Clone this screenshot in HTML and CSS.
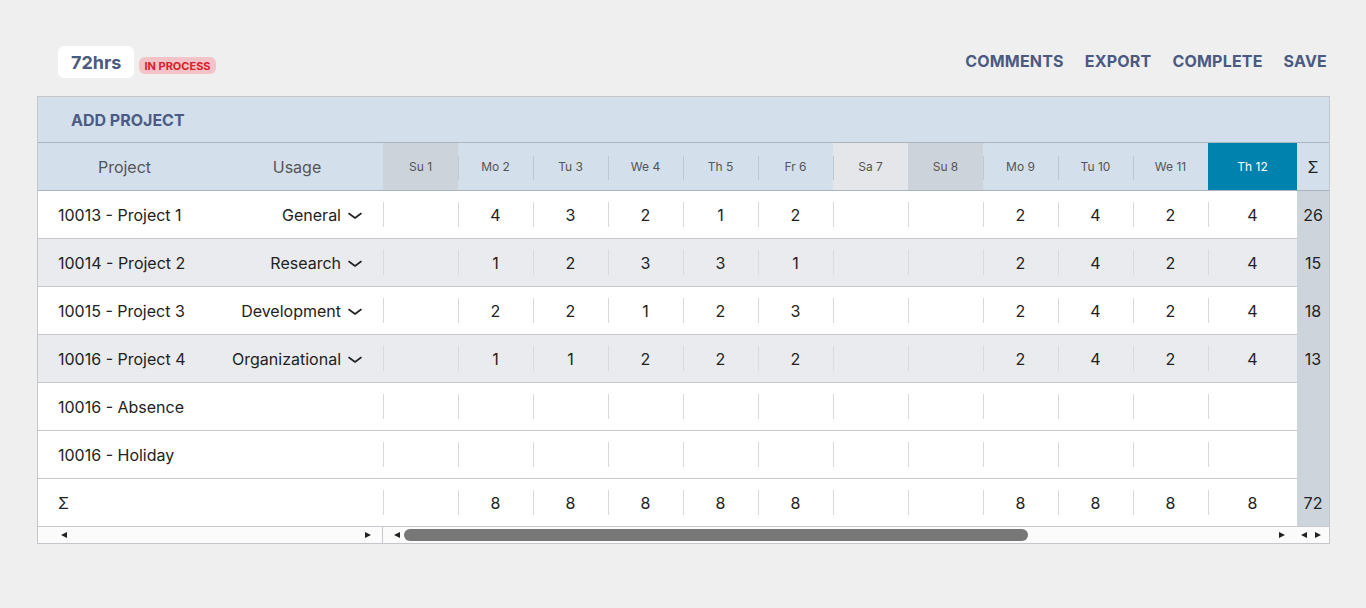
FILE: index.html
```html
<!DOCTYPE html>
<html lang="en">
<head>
<meta charset="utf-8">
<title>Timesheet</title>
<link rel="stylesheet" href="styles.css">
</head>
<body>
<div class="page">
  <div class="topbar">
    <div class="total">72hrs</div>
    <div class="status">IN PROCESS</div>
    <nav class="actions">
      <span>COMMENTS</span>
      <span>EXPORT</span>
      <span>COMPLETE</span>
      <span>SAVE</span>
    </nav>
  </div>

  <div class="sheet">
    <div class="addbar">ADD PROJECT</div>

    <div class="row head">
      <div class="main">
        <div class="left">
          <div class="proj">Project</div>
          <div class="usage">Usage</div>
        </div>
        <div class="day we-dark">Su 1</div>
        <div class="day">Mo 2</div>
        <div class="day">Tu 3</div>
        <div class="day">We 4</div>
        <div class="day">Th 5</div>
        <div class="day">Fr 6</div>
        <div class="day we-light">Sa 7</div>
        <div class="day we-dark">Su 8</div>
        <div class="day">Mo 9</div>
        <div class="day">Tu 10</div>
        <div class="day">We 11</div>
        <div class="day last today">Th 12</div>
      </div>
      <div class="sig">Σ</div>
    </div>

    <div class="row">
      <div class="main">
        <div class="left">
          <div class="proj">10013 - Project 1</div>
          <div class="usage">General <svg class="chev" width="14" height="8" viewBox="0 0 14 8"><path d="M1 1.5 L7 6 L13 1.5"/></svg></div>
        </div>
        <div class="day"></div><div class="day">4</div><div class="day">3</div><div class="day">2</div><div class="day">1</div><div class="day">2</div>
        <div class="day"></div><div class="day"></div><div class="day">2</div><div class="day">4</div><div class="day">2</div><div class="day last">4</div>
      </div>
      <div class="sig">26</div>
    </div>

    <div class="row alt">
      <div class="main">
        <div class="left">
          <div class="proj">10014 - Project 2</div>
          <div class="usage">Research <svg class="chev" width="14" height="8" viewBox="0 0 14 8"><path d="M1 1.5 L7 6 L13 1.5"/></svg></div>
        </div>
        <div class="day"></div><div class="day">1</div><div class="day">2</div><div class="day">3</div><div class="day">3</div><div class="day">1</div>
        <div class="day"></div><div class="day"></div><div class="day">2</div><div class="day">4</div><div class="day">2</div><div class="day last">4</div>
      </div>
      <div class="sig">15</div>
    </div>

    <div class="row">
      <div class="main">
        <div class="left">
          <div class="proj">10015 - Project 3</div>
          <div class="usage">Development <svg class="chev" width="14" height="8" viewBox="0 0 14 8"><path d="M1 1.5 L7 6 L13 1.5"/></svg></div>
        </div>
        <div class="day"></div><div class="day">2</div><div class="day">2</div><div class="day">1</div><div class="day">2</div><div class="day">3</div>
        <div class="day"></div><div class="day"></div><div class="day">2</div><div class="day">4</div><div class="day">2</div><div class="day last">4</div>
      </div>
      <div class="sig">18</div>
    </div>

    <div class="row alt">
      <div class="main">
        <div class="left">
          <div class="proj">10016 - Project 4</div>
          <div class="usage">Organizational <svg class="chev" width="14" height="8" viewBox="0 0 14 8"><path d="M1 1.5 L7 6 L13 1.5"/></svg></div>
        </div>
        <div class="day"></div><div class="day">1</div><div class="day">1</div><div class="day">2</div><div class="day">2</div><div class="day">2</div>
        <div class="day"></div><div class="day"></div><div class="day">2</div><div class="day">4</div><div class="day">2</div><div class="day last">4</div>
      </div>
      <div class="sig">13</div>
    </div>

    <div class="row">
      <div class="main">
        <div class="left">
          <div class="proj wide">10016 - Absence</div>
        </div>
        <div class="day"></div><div class="day"></div><div class="day"></div><div class="day"></div><div class="day"></div><div class="day"></div>
        <div class="day"></div><div class="day"></div><div class="day"></div><div class="day"></div><div class="day"></div><div class="day last"></div>
      </div>
      <div class="sig"></div>
    </div>

    <div class="row">
      <div class="main">
        <div class="left">
          <div class="proj wide">10016 - Holiday</div>
        </div>
        <div class="day"></div><div class="day"></div><div class="day"></div><div class="day"></div><div class="day"></div><div class="day"></div>
        <div class="day"></div><div class="day"></div><div class="day"></div><div class="day"></div><div class="day"></div><div class="day last"></div>
      </div>
      <div class="sig"></div>
    </div>

    <div class="row total-row">
      <div class="main">
        <div class="left">
          <div class="proj wide">Σ</div>
        </div>
        <div class="day"></div><div class="day">8</div><div class="day">8</div><div class="day">8</div><div class="day">8</div><div class="day">8</div>
        <div class="day"></div><div class="day"></div><div class="day">8</div><div class="day">8</div><div class="day">8</div><div class="day last">8</div>
      </div>
      <div class="sig">72</div>
    </div>

    <div class="scrollrow">
      <div class="sc-left">
        <span class="tri tri-l"></span>
        <span class="tri tri-r"></span>
      </div>
      <div class="sc-main">
        <span class="tri tri-l"></span>
        <span class="thumb"></span>
        <span class="tri tri-r push"></span>
      </div>
      <div class="sc-sig">
        <span class="tri tri-l"></span>
        <span class="tri tri-r"></span>
      </div>
    </div>
  </div>
</div>
</body>
</html>
```

FILE: styles.css
```css
* { box-sizing: border-box; }

body {
  margin: 0;
  background: #efefef;
  font-family: Inter, "Noto Sans", "Liberation Sans", sans-serif;
  color: #222;
}

.page {
  padding: 46px 36px 0 37px;
}

/* ---------- top bar ---------- */
.topbar {
  display: flex;
  align-items: center;
  height: 32px;
  padding: 0 3px 0 21px;
  margin-bottom: 18px;
}

.total {
  height: 32px;
  display: flex;
  align-items: center;
  padding: 0 13px;
  background: #fff;
  border-radius: 6px;
  font-size: 18px;
  font-weight: 700;
  color: #4a5a82;
}

.status {
  align-self: flex-end;
  margin: 0 0 4px 5px;
  height: 17px;
  display: flex;
  align-items: center;
  padding: 0 5px;
  background: #f3c3c7;
  border-radius: 6px;
  font-size: 11px;
  font-weight: 700;
  color: #d8202c;
}

.actions {
  margin-left: auto;
  margin-bottom: 2px;
  display: flex;
  gap: 21px;
  font-size: 16px;
  font-weight: 700;
  letter-spacing: 0.2px;
  color: #4a5a82;
}

/* ---------- sheet ---------- */
.sheet {
  border: 1px solid #c3c6ca;
  background: #fff;
}

.addbar {
  height: 46px;
  display: flex;
  align-items: center;
  padding-left: 33px;
  background: #d3dfea;
  border-bottom: 1px solid #aab4c0;
  font-size: 16px;
  font-weight: 700;
  color: #4b5b84;
}

.row {
  display: flex;
  height: 48px;
}

.main {
  flex: 1;
  display: flex;
  border-bottom: 1px solid #c5c8cc;
  background: #fff;
}

.row.alt .main { background: #e9ebee; }

.left {
  width: 345px;
  display: flex;
  align-items: center;
  font-size: 16px;
}

.proj {
  width: 173px;
  padding-left: 20px;
  white-space: nowrap;
}

.proj.wide { width: auto; }

.usage {
  flex: 1;
  display: flex;
  align-items: center;
  justify-content: flex-end;
  gap: 7px;
  padding-right: 21px;
  white-space: nowrap;
}

.chev {
  margin-top: 3px;
}

.chev path {
  fill: none;
  stroke: #222;
  stroke-width: 1.6;
  stroke-linecap: round;
  stroke-linejoin: round;
}

.day {
  position: relative;
  width: 75px;
  display: flex;
  align-items: center;
  justify-content: center;
  font-size: 16px;
}

.day::before {
  content: "";
  position: absolute;
  left: 0;
  top: 11px;
  bottom: 11px;
  width: 1px;
  background: #dadada;
}

.day.last { flex: 1; }

.sig {
  width: 32px;
  display: flex;
  align-items: center;
  justify-content: center;
  background: #cdd4dc;
  font-size: 16px;
}

/* header row */
.row.head .main {
  background: #d3dfea;
  border-bottom: 1px solid #aab4c0;
}

.row.head .proj {
  padding-left: 0;
  text-align: center;
  color: #555;
}

.row.head .usage {
  justify-content: center;
  padding-right: 0;
  color: #555;
}

.row.head .day {
  font-size: 12px;
  color: #555;
}

.row.head .day::before {
  top: 13px;
  bottom: 10px;
  background: #bfc8d2;
}

.row.head .day.we-dark { background: #ccd3db; }
.row.head .day.we-light { background: #e4e6ea; }
.row.head .day.today { background: #0082ae; color: #fff; }
.row.head .day.we-dark::before,
.row.head .day.today::before { display: none; }

.row.head .sig {
  background: #d3dfea;
  border-bottom: 1px solid #aab4c0;
}

.row.total-row { height: 47px; }
.row.total-row .main { border-bottom: none; }

/* ---------- scrollbar row ---------- */
.scrollrow {
  display: flex;
  height: 17px;
  border-top: 1px solid #c5c8cc;
  background: #fbfbfb;
}

.sc-left {
  width: 345px;
  display: flex;
  align-items: center;
  justify-content: space-between;
  padding: 0 11px 0 23px;
  border-right: 1px solid #c5c8cc;
}

.sc-main {
  flex: 1;
  display: flex;
  align-items: center;
  padding: 0 12px 0 11px;
}

.thumb {
  width: 624px;
  height: 12px;
  margin-left: 4px;
  border-radius: 6px;
  background: #777;
}

.push { margin-left: auto; }

.sc-sig {
  width: 32px;
  display: flex;
  align-items: center;
  gap: 8px;
  padding-left: 4px;
}

.tri {
  width: 0;
  height: 0;
  border-top: 3.5px solid transparent;
  border-bottom: 3.5px solid transparent;
}

.tri-l { border-right: 6px solid #222; }
.tri-r { border-left: 6px solid #222; }
```
